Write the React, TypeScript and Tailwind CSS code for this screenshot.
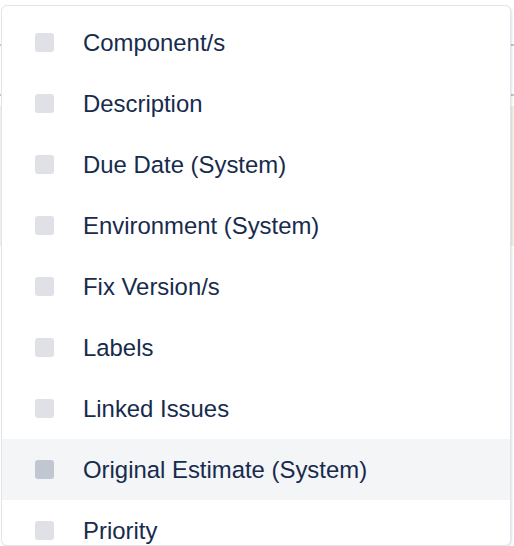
const fields = [
  "Component/s",
  "Description",
  "Due Date (System)",
  "Environment (System)",
  "Fix Version/s",
  "Labels",
  "Linked Issues",
  "Original Estimate (System)",
  "Priority",
];

const HOVER = "Original Estimate (System)";

export default function App() {
  return (
    <div
      className="relative h-[546px] w-[514px] overflow-hidden bg-white"
      style={{ fontFamily: '"Liberation Sans", Arial, sans-serif' }}
    >
      {/* page content peeking out behind the menu */}
      <div className="flex flex-col pt-[44px]">
        <div className="h-[2px] bg-[#c1c7d0]" />
        <div className="h-[48px]" />
        <div className="h-[2px] bg-[#c1c7d0]" />
        <div className="h-[10px]" />
        <div className="flex h-[140px] items-start justify-end bg-[#f3f0e3] pt-[80px]">
          <span className="mr-[-6px] text-[22px] leading-none text-[#222]">t</span>
        </div>
      </div>

      {/* dropdown menu */}
      <div className="absolute left-[1px] top-[5px] h-[541px] w-[510px] overflow-hidden rounded-[6px] border border-[#e2e4e9] bg-white pt-[6px] shadow-[1px_1px_2px_rgba(9,30,66,0.12)]">
        {fields.map((f) => {
          const active = f === HOVER;
          return (
            <div
              key={f}
              className={
                "flex h-[61px] items-center " + (active ? "bg-[#f4f5f7]" : "")
              }
            >
              <span
                className={
                  "ml-[33px] h-[19px] w-[19px] rounded-[3px] " +
                  (active ? "bg-[#c1c7d0]" : "bg-[#dfe1e6]")
                }
              />
              <span className="ml-[29px] text-[23.9px] leading-none text-[#172b4d]">
                {f}
              </span>
            </div>
          );
        })}
      </div>
    </div>
  );
}
